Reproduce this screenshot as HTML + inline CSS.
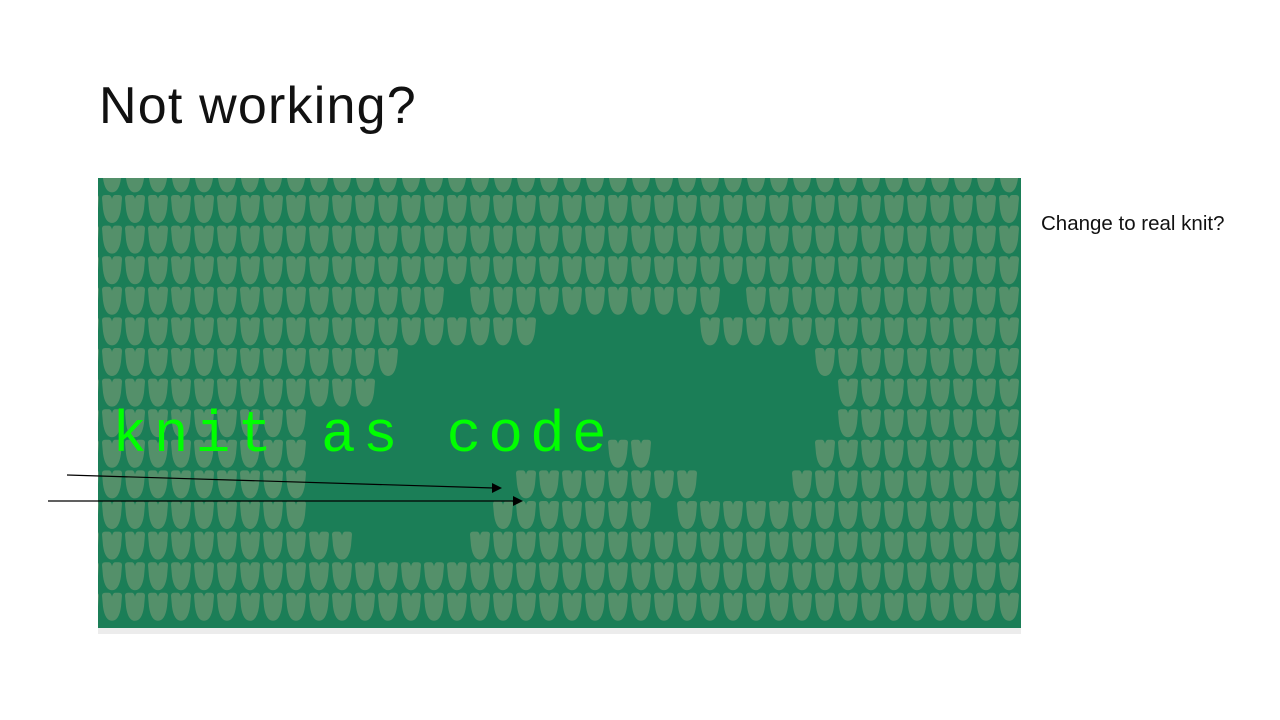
<!DOCTYPE html>
<html><head><meta charset="utf-8"><style>
body{margin:0;width:1280px;height:720px;background:#fff;position:relative;overflow:hidden;font-family:"Liberation Sans",sans-serif}
#t{position:absolute;left:99px;top:76px;font-size:52px;color:#111;letter-spacing:1.2px}
#c{position:absolute;left:1041px;top:212px;font-size:20.5px;color:#111}
#k{position:absolute;left:112px;top:404px;font-family:"Liberation Mono",monospace;font-size:58px;color:#00ff00;letter-spacing:7px;white-space:pre}
</style></head><body>
<div id="t">Not working?</div>
<div id="c">Change to real knit?</div>
<svg id="s" width="1280" height="720" style="position:absolute;left:0;top:0">
<defs><clipPath id="cp"><rect x="98" y="178" width="923" height="450"/></clipPath>
<path id="v" d="M0,3 Q0,0 3,0 L7,0 Q9,0 10,4 Q11,0 13,0 L17,0 Q20,0 20,3 L19,14 Q17,28 10,28 Q3,28 1,14 Z" fill="#54906a"/></defs>
<rect x="98" y="178" width="923" height="450" fill="#1b7e57"/>
<rect x="98" y="628" width="923" height="6" fill="#ececec"/>
<g id="g" clip-path="url(#cp)"></g>
<line x1="67" y1="475" x2="494" y2="488" stroke="#000" stroke-width="1.2"/>
<polygon points="502,488 492,483 492,493" fill="#000"/>
<line x1="48" y1="501" x2="514" y2="501" stroke="#000" stroke-width="1.2"/>
<polygon points="523,501 513,496 513,506" fill="#000"/>
</svg>
<div id="k">knit as code</div>
<script>
var gaps={3:[[445,469],[721,746]],4:[[537,700]],5:[[398,814]],6:[[375,837]],7:[[307,837]],8:[[307,607],[652,814]],9:[[307,516],[699,792]],10:[[307,493],[652,678]],11:[[351,469]]};
var g=document.getElementById('g'),h='';
for(var k=-1;k<14;k++){var y=195+30.6*k;var gs=gaps[k]||[];
for(var x=79;x<1030;x+=23){var cx=x+10,skip=false;gs.forEach(function(r){if(cx>r[0]&&cx<r[1])skip=true});
if(!skip)h+='<use href="#v" x="'+x+'" y="'+y.toFixed(1)+'"/>';}}
g.innerHTML=h;
</script>
</body></html>
